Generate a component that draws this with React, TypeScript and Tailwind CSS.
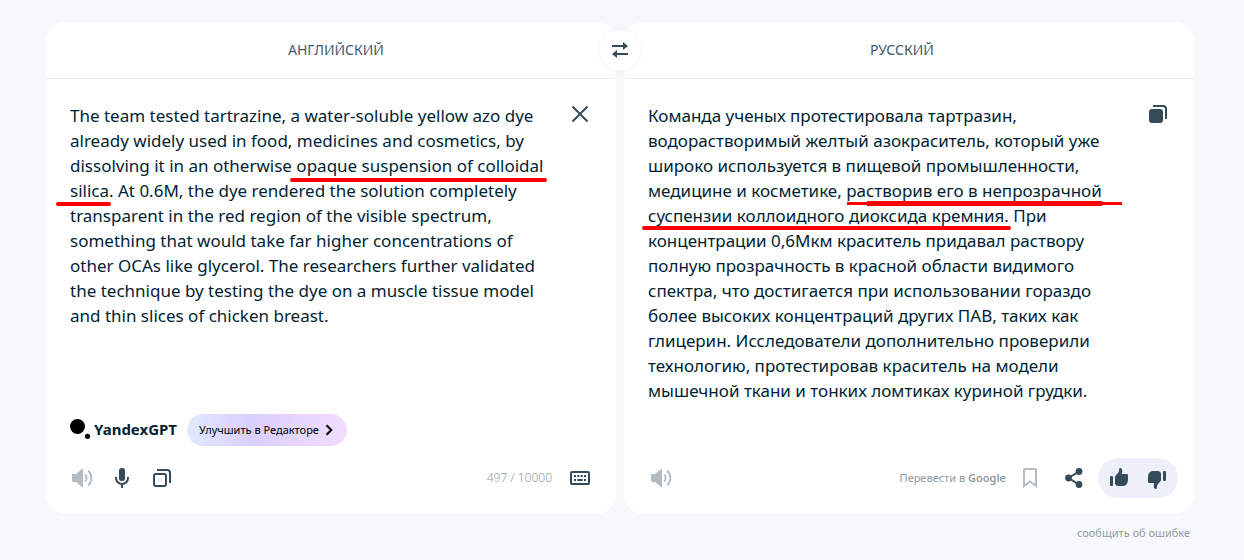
import type { ReactNode } from "react";

const sourceText = [
  "The team tested tartrazine, a water-soluble yellow azo dye",
  "already widely used in food, medicines and cosmetics, by",
  "dissolving it in an otherwise opaque suspension of colloidal",
  "silica. At 0.6M, the dye rendered the solution completely",
  "transparent in the red region of the visible spectrum,",
  "something that would take far higher concentrations of",
  "other OCAs like glycerol. The researchers further validated",
  "the technique by testing the dye on a muscle tissue model",
  "and thin slices of chicken breast.",
].join("\n");

const translatedText = [
  "Команда ученых протестировала тартразин,",
  "водорастворимый желтый азокраситель, который уже",
  "широко используется в пищевой промышленности,",
  "медицине и косметике, растворив его в непрозрачной",
  "суспензии коллоидного диоксида кремния. При",
  "концентрации 0,6Мкм краситель придавал раствору",
  "полную прозрачность в красной области видимого",
  "спектра, что достигается при использовании гораздо",
  "более высоких концентраций других ПАВ, таких как",
  "глицерин. Исследователи дополнительно проверили",
  "технологию, протестировав краситель на модели",
  "мышечной ткани и тонких ломтиках куриной грудки.",
].join("\n");

function Icon({ children }: { children: ReactNode }) {
  return (
    <svg viewBox="0 0 24 24" className="size-6 shrink-0" fill="none" stroke="currentColor" strokeWidth="2" aria-hidden="true">
      {children}
    </svg>
  );
}

function IconButton({ label, muted = false, children }: { label: string; muted?: boolean; children: ReactNode }) {
  return (
    <button
      type="button"
      aria-label={label}
      className={
        muted
          ? "flex size-10 shrink-0 items-center justify-center text-[#b3bcc2]"
          : "flex size-10 shrink-0 items-center justify-center text-[#344b5a]"
      }
    >
      <Icon>{children}</Icon>
    </button>
  );
}

const volume = (
  <>
    <path d="M2 9q0-1 1-1h3l6-5h1v18h-1l-6-5H3q-1 0-1-1z" fill="currentColor" stroke="none" />
    <path d="M15.2 8.500a5.500 5.500 0 0 1 0 7M18.200 4.500a10.500 10.500 0 0 1 0 15" strokeWidth="1.800" />
  </>
);

const thumb = (
  <>
    <rect x="4" y="10" width="3" height="10" rx="1" fill="currentColor" stroke="none" />
    <path
      d="M9 11.500c0-1 .3-1.600 1-2.300L12.800 6 13.200 3c.2-1.400 1.500-1.300 2.200-.5.9 1 1 2.200.8 3.500L15.700 8H20.500c1 0 1.500.6 1.500 1.500v3.500c0 3.800-1.600 7-5 7h-4.500C10.300 20 9 18.800 9 17z"
      fill="currentColor"
      stroke="none"
    />
  </>
);

function Card({ children }: { children: ReactNode }) {
  return <section className="flex min-w-0 flex-1 flex-col rounded-[20px] bg-white pb-4">{children}</section>;
}

export default function App() {
  return (
    <div className="min-h-screen bg-[#f7f8fc] pt-[22px] pr-[50px] pl-[46px] font-['Noto_Sans','Open_Sans',sans-serif] text-[#001f33]">
      <main className="relative flex gap-2">
        <Card>
          <header className="flex h-14 items-center justify-center pl-[10px]">
            <button type="button" className="text-sm text-[#44596a] uppercase">Английский</button>
          </header>
          <div className="relative flex items-start border-t border-[#e8ebf4] pt-[23px] pr-6 pl-6">
            <textarea
              aria-label="Исходный текст"
              rows={9}
              defaultValue={sourceText}
              spellCheck={false}
              className="min-w-0 flex-1 resize-none bg-transparent pt-px text-[17px] leading-[25px] outline-none"
            />
            <button type="button" aria-label="Очистить" className="text-[#344b5a]">
              <Icon>
                <path d="M4.500 4.500l15 15M19.500 4.500l-15 15" />
              </Icon>
            </button>
            <div className="pointer-events-none absolute top-[99px] left-[244px] h-1 w-[257px] rounded-full bg-[#ff0000]" />
            <div className="pointer-events-none absolute top-[123px] left-[10px] h-1 w-[55px] rounded-full bg-[#ff0000]" />
          </div>
          <div className="mt-auto flex items-center pb-3 pl-6">
            <svg viewBox="0 0 22 22" className="mr-0.5 size-[22px]" fill="#000" aria-hidden="true">
              <circle cx="7.500" cy="7.500" r="7.500" />
              <circle cx="17.500" cy="17.300" r="2.600" />
            </svg>
            <span className="pb-0.5 text-[15px] font-bold">YandexGPT</span>
            <button
              type="button"
              className="ml-[10px] flex h-8 items-center gap-1 rounded-full bg-linear-to-r from-[#e0eaff] via-[#dacfff] via-40% to-[#f2dcff] px-3 text-[11px] text-black"
            >
              Улучшить в Редакторе
              <svg viewBox="0 0 12 12" className="size-3" fill="none" stroke="currentColor" strokeWidth="2" aria-hidden="true">
                <path d="M3.500 1.200L8.300 6l-4.800 4.800" />
              </svg>
            </button>
          </div>
          <footer className="flex items-center px-4">
            <IconButton label="Прослушать" muted>{volume}</IconButton>
            <IconButton label="Голосовой ввод">
              <rect x="9" y="2" width="6" height="13" rx="2.500" fill="currentColor" stroke="none" />
              <path d="M6 11v1a6 6 0 0 0 12 0v-1M12 18v4" />
            </IconButton>
            <IconButton label="Копировать">
              <rect x="4" y="8" width="12" height="12" rx="2" />
              <path d="M7 4h10a3 3 0 0 1 3 3v10" />
            </IconButton>
            <span className="mr-2 ml-auto text-xs font-light text-[#8f9ba3]">497 / 10000</span>
            <IconButton label="Клавиатура">
              <rect x="3" y="6" width="18" height="12" rx="1" />
              <path d="M6 10h2M9.300 10h2M12.700 10h2M16 10h2M6 14h2M9.300 14h5.400M16 14h2" />
            </IconButton>
          </footer>
        </Card>

        <button
          type="button"
          aria-label="Поменять языки местами"
          className="absolute top-2 left-1/2 flex size-10 -translate-x-1/2 items-center justify-center rounded-full bg-white text-[#344b5a] shadow-[0_0_6px_rgba(0,31,51,0.06)]"
        >
          <svg viewBox="0 0 16 16" className="size-4" fill="none" stroke="currentColor" strokeWidth="2" aria-hidden="true">
            <path d="M0 4h12M16 12H4" />
            <path d="M11 0l5 4-5 4zM5 8l-5 4 5 4z" fill="currentColor" stroke="none" />
          </svg>
        </button>

        <Card>
          <header className="flex h-14 items-center justify-center pr-[14px]">
            <button type="button" className="text-sm text-[#44596a] uppercase">Русский</button>
          </header>
          <div className="relative flex items-start border-t border-[#e8ebf4] px-6 pt-[23px] pb-[55px]">
            <p className="min-w-0 flex-1 pt-px text-[17px] leading-[25px] whitespace-pre">{translatedText}</p>
            <button type="button" aria-label="Копировать перевод" className="text-[#344b5a]">
              <Icon>
                <rect x="4" y="8" width="12" height="12" rx="2" fill="currentColor" />
                <path d="M7 4h10a3 3 0 0 1 3 3v10" />
              </Icon>
            </button>
            <div className="pointer-events-none absolute top-[122px] left-[223px] flex w-[275px] items-center">
              <div className="h-[3px] w-5 bg-[#ff0000]" />
              <div className="h-[5px] flex-1 bg-[#ff0000]" />
              <div className="h-[3px] w-5 bg-[#ff0000]" />
            </div>
            <div className="pointer-events-none absolute top-[147px] left-[18px] h-1 w-[369px] rounded-full bg-[#ff0000]" />
          </div>
          <footer className="mt-auto flex items-center gap-1 pr-4 pl-[17px]">
            <IconButton label="Прослушать перевод" muted>{volume}</IconButton>
            <a href="#google" className="ml-auto text-[11px] text-[#8f9ba3]">
              Перевести в <span className="font-semibold">Google</span>
            </a>
            <IconButton label="Добавить в избранное" muted>
              <path d="M6 20V4q0-1 1-1h10q1 0 1 1v16l-6-4.500z" />
            </IconButton>
            <IconButton label="Поделиться">
              <path d="M17 5.500L6.500 12 17 18.500" />
              <g fill="currentColor" stroke="none">
                <circle cx="17" cy="5.500" r="3.400" />
                <circle cx="6.500" cy="12" r="3.400" />
                <circle cx="17" cy="18.500" r="3.400" />
              </g>
            </IconButton>
            <div className="flex rounded-full bg-[#edf0f8]">
              <IconButton label="Хороший перевод">{thumb}</IconButton>
              <IconButton label="Плохой перевод">
                <g transform="rotate(180 12 12.500)">{thumb}</g>
              </IconButton>
            </div>
          </footer>
        </Card>
      </main>
      <div className="flex justify-end pt-[9px] pr-1">
        <a href="#report" className="text-[11px] leading-5 text-[#8f9ba3]">сообщить об ошибке</a>
      </div>
    </div>
  );
}
